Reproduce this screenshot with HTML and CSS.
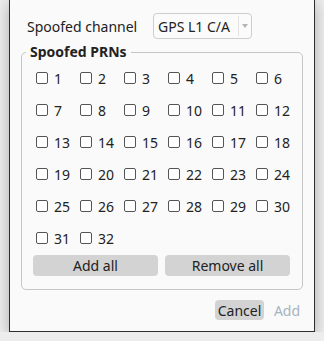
FILE: index.html
```html
<!DOCTYPE html>
<html lang="en">
<head>
<meta charset="UTF-8">
<title>Spoofed PRNs</title>
<link rel="stylesheet" href="styles.css">
</head>
<body>
  <div class="window">
    <div class="channel-row">
      <span class="label">Spoofed channel</span>
      <div class="combo">
        <span class="combo-text">GPS L1 C/A</span>
        <span class="combo-arrow"><span class="tri"></span></span>
      </div>
    </div>

    <div class="frame">
      <div class="legend">Spoofed PRNs</div>
      <div class="grid" id="prnGrid"></div>
      <div class="frame-buttons">
        <button class="btn">Add all</button>
        <button class="btn">Remove all</button>
      </div>
    </div>

    <div class="dialog-buttons">
      <button class="btn cancel">Cancel</button>
      <button class="btn flat" disabled>Add</button>
    </div>
  </div>
<script>
  const prnGrid = document.getElementById("prnGrid")
  for (let i = 1; i <= 32; i++) {
    const item = document.createElement("label")
    item.className = "check"
    item.innerHTML = '<span class="box"></span><span>' + i + '</span>'
    prnGrid.appendChild(item)
  }
</script>
</body>
</html>
```

FILE: styles.css
```css
body {
  margin: 0;
  background-color: #ededed;
  font-family: "Noto Sans", sans-serif;
  font-size: 14px;
  color: #222;
}

.window {
  margin-left: 9px;
  width: 304px;
  height: 331px;
  box-sizing: content-box;
  background-color: #fafafa;
  border: 1px solid #2e2e2e;
  border-top: none;
  box-shadow: 0 3px 14px rgba(0, 0, 0, 0.28);
}

.channel-row {
  display: flex;
  align-items: center;
  padding: 13px 0 0 17px;
  height: 26px;
}

.label {
  width: 126px;
}

.combo {
  display: flex;
  align-items: center;
  width: 97px;
  height: 24px;
  border: 1px solid #cdcdcd;
  border-radius: 4px;
  background-color: #fbfbfb;
}

.combo-text {
  flex: 1;
  padding-left: 4px;
  white-space: nowrap;
}

.combo-arrow {
  display: flex;
  align-items: center;
  justify-content: center;
  width: 12px;
  height: 20px;
  border-left: 1px solid #e2e2e2;
}

.tri {
  width: 0;
  height: 0;
  border-left: 3px solid transparent;
  border-right: 3px solid transparent;
  border-top: 4px solid #b4b4b4;
}

.frame {
  position: relative;
  margin: 13px 0 0 11px;
  width: 280px;
  height: 236px;
  border: 1px solid #c6c6c6;
  border-radius: 5px;
}

.legend {
  position: absolute;
  top: -11px;
  left: 4px;
  padding: 0 4px;
  background-color: #fafafa;
  font-weight: bold;
}

.grid {
  display: grid;
  grid-template-columns: repeat(6, 44px);
  grid-auto-rows: 32px;
  padding: 9px 0 0 14px;
}

.check {
  display: flex;
  align-items: center;
  gap: 6px;
  height: 32px;
}

.box {
  width: 10px;
  height: 10px;
  border: 1px solid #555;
  border-radius: 2px;
  background-color: #fff;
}

.frame-buttons {
  display: flex;
  gap: 7px;
  padding: 1px 0 0 11px;
}

.btn {
  font-family: inherit;
  font-size: 14px;
  color: #222;
  border: none;
  border-radius: 4px;
  background-color: #d3d3d3;
  padding: 0;
  height: 21px;
}

.frame-buttons .btn {
  width: 125px;
}

.dialog-buttons {
  display: flex;
  gap: 6px;
  padding: 10px 0 0 205px;
}

.cancel {
  width: 49px;
  height: 20px;
}

.flat {
  background: none;
  color: #a7b3c0;
  width: 34px;
  height: 20px;
}
```
